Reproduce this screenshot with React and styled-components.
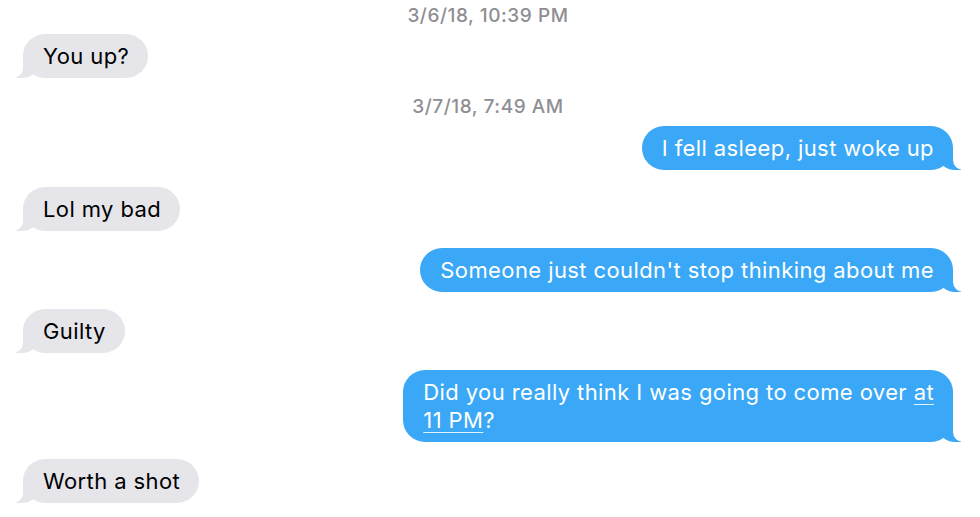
import React from "react";
import styled, { createGlobalStyle, css } from "styled-components";

const Global = createGlobalStyle`
  html, body { margin: 0; padding: 0; background: #ffffff; }
  body { font-family: Inter, "Noto Sans", "Liberation Sans", sans-serif; -webkit-font-smoothing: antialiased; }
`;

const Thread = styled.div`
  width: 980px;
  height: 517px;
  box-sizing: border-box;
  padding: 5px 27px 0 23px;
  display: flex;
  flex-direction: column;
  overflow: hidden;
  background: #fff;
`;

const Stamp = styled.div`
  align-self: center;
  font-size: 19px;
  line-height: 22px;
  font-weight: 500;
  color: #8e8e93;
  letter-spacing: 0.55px;
  margin: ${(p) => p.$top || 0}px 0 ${(p) => p.$bottom || 0}px;
`;

const BLUE = "#3aa8f7";
const GRAY = "#e5e5ea";

const Bubble = styled.div`
  position: relative;
  max-width: 560px;
  padding: 8px 19px 8px 20px;
  border-radius: 22px;
  font-size: 22px;
  line-height: 28px;
  letter-spacing: 0.4px;
  margin-top: ${(p) => (p.$gap == null ? 17 : p.$gap)}px;
  &::before,
  &::after {
    content: "";
    position: absolute;
    bottom: 0;
    height: 22px;
  }
  ${(p) =>
    p.$me
      ? css`
          align-self: flex-end;
          background: ${BLUE};
          color: #fff;
          &::before {
            right: -8px;
            width: 22px;
            background: ${BLUE};
            border-bottom-left-radius: 16px 14px;
          }
          &::after {
            right: -26px;
            width: 26px;
            background: #fff;
            border-bottom-left-radius: 10px;
          }
        `
      : css`
          align-self: flex-start;
          background: ${GRAY};
          color: #000;
          &::before {
            left: -7px;
            width: 22px;
            background: ${GRAY};
            border-bottom-right-radius: 16px 14px;
          }
          &::after {
            left: -26px;
            width: 26px;
            background: #fff;
            border-bottom-right-radius: 10px;
          }
        `}
`;

const Link = styled.span`
  text-decoration: underline;
  text-decoration-thickness: 1px;
  text-underline-offset: 4px;
  text-decoration-color: rgba(255, 255, 255, 0.85);
`;

export default function App() {
  return (
    <>
      <Global />
      <Thread>
        <Stamp>3/6/18, 10:39 PM</Stamp>
        <Bubble $gap={7}>You up?</Bubble>
        <Stamp $top={18} $bottom={0}>3/7/18, 7:49 AM</Stamp>
        <Bubble $me $gap={8}>I fell asleep, just woke up</Bubble>
        <Bubble>Lol my bad</Bubble>
        <Bubble $me>Someone just couldn't stop thinking about me</Bubble>
        <Bubble>Guilty</Bubble>
        <Bubble $me>
          Did you really think I was going to come over <Link>at</Link>
          <br />
          <Link>11 PM</Link>?
        </Bubble>
        <Bubble>Worth a shot</Bubble>
      </Thread>
    </>
  );
}
